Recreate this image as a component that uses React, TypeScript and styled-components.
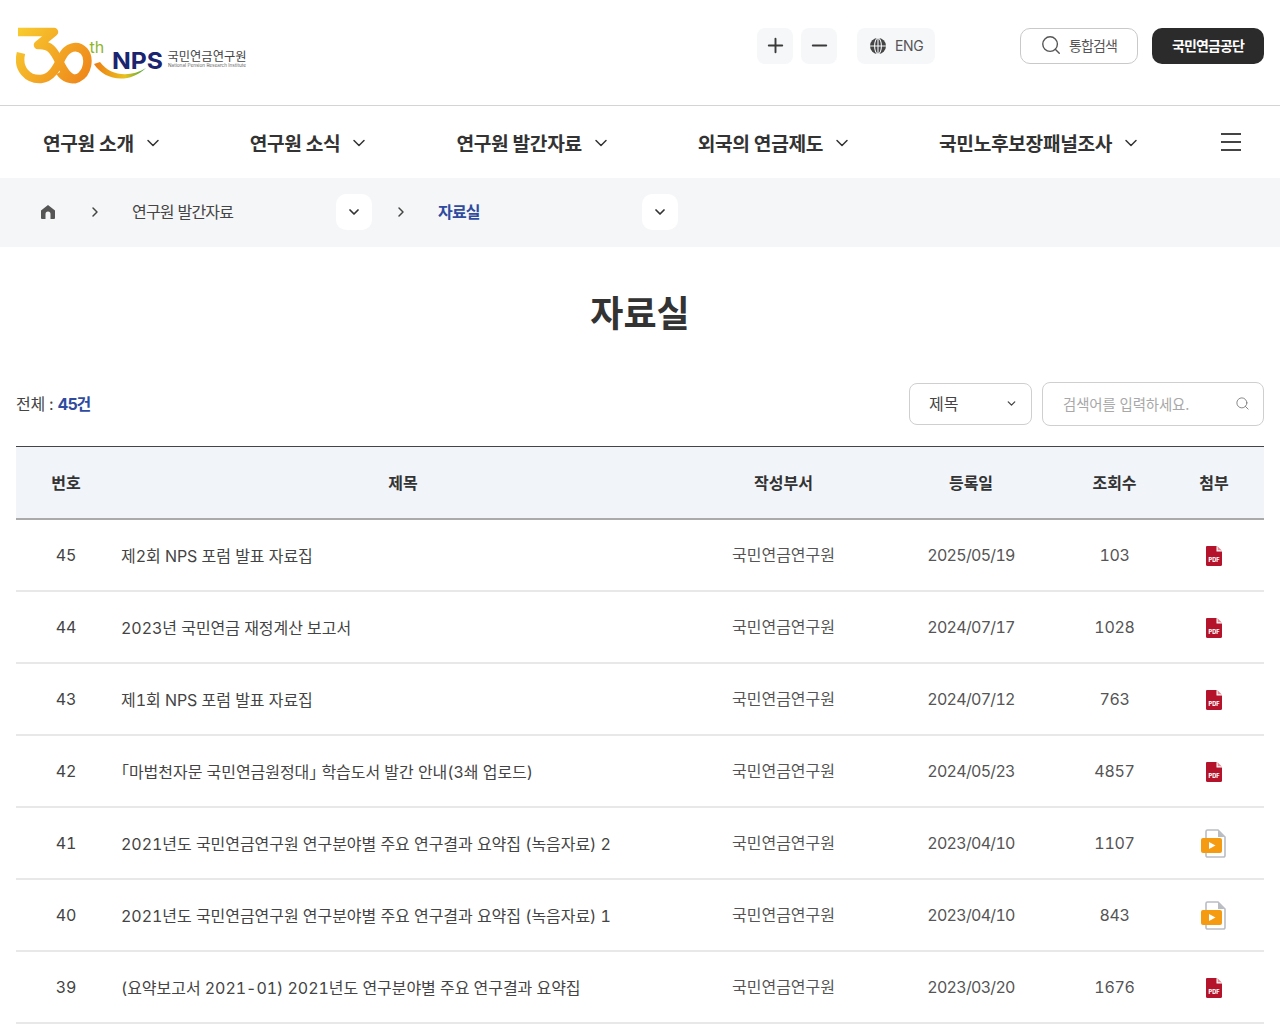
import React from 'react'
import styled, { createGlobalStyle } from 'styled-components'
import { ChevronDown, ChevronRight, Minus, Plus, Search } from 'lucide-react'

const GlobalStyle = createGlobalStyle`
  html, body {
    margin: 0;
    padding: 0;
    background: #fff;
    color: #333;
    font-family: Inter, "Noto Sans CJK KR", sans-serif;
    overflow: hidden;
  }
  * {
    box-sizing: border-box;
  }
`

const Header = styled.header`
  display: flex;
  align-items: center;
  height: 106px;
  padding: 0 16px 14px;
  border-bottom: 1px solid #d4d4d4;
`

const LogoLink = styled.a`
  display: block;
  width: 240px;
  height: 64px;
  margin-top: 20px;
  svg {
    display: block;
  }
`

const Tools = styled.div`
  display: flex;
  align-items: center;
  margin-left: auto;
`

const SizeButton = styled.button`
  display: flex;
  align-items: center;
  justify-content: center;
  width: 36px;
  height: 36px;
  margin-right: 8px;
  padding: 0;
  border: 0;
  border-radius: 8px;
  background: #f6f7f9;
  color: #3a3a3a;
`

const LangButton = styled.button`
  display: flex;
  align-items: center;
  gap: 8px;
  width: 78px;
  height: 36px;
  margin: 0 85px 0 12px;
  padding: 0 0 0 12px;
  border: 0;
  border-radius: 8px;
  background: #f6f7f9;
  color: #555;
  font: 400 14px Inter, "Noto Sans CJK KR", sans-serif;
  letter-spacing: -0.3px;
`

const SearchButton = styled.button`
  display: flex;
  align-items: center;
  gap: 7px;
  width: 118px;
  height: 36px;
  margin-right: 14px;
  padding: 0 0 2px 19px;
  border: 1px solid #c9c9c9;
  border-radius: 10px;
  background: #fff;
  color: #555;
  font: 400 14px Inter, "Noto Sans CJK KR", sans-serif;
  letter-spacing: -0.9px;
`

const AgencyButton = styled.button`
  width: 112px;
  height: 36px;
  padding: 0 0 2px;
  border: 0;
  border-radius: 10px;
  background: #2b2b2b;
  color: #fff;
  font: 700 14px Inter, "Noto Sans CJK KR", sans-serif;
  letter-spacing: -0.9px;
`

const Nav = styled.nav`
  display: flex;
  align-items: center;
  justify-content: space-between;
  height: 72px;
  padding: 0 39px 0 43px;
`

const NavList = styled.div`
  display: flex;
  align-items: center;
  gap: 87px;
  padding-top: 2px;
`

const NavItem = styled.a`
  display: flex;
  align-items: center;
  gap: 9px;
  color: #333;
  font-size: 19.2px;
  font-weight: 700;
  letter-spacing: -0.35px;
  white-space: nowrap;
`

const Burger = styled.button`
  display: flex;
  padding: 0;
  border: 0;
  background: none;
`

const Crumbs = styled.div`
  display: flex;
  align-items: center;
  height: 69px;
  padding: 0 0 1px 40px;
  background: #f5f6f7;
  font-size: 16px;
`

const HomeLink = styled.a`
  display: flex;
  width: 47px;
  color: #555;
`

const CrumbArrow = styled.span`
  display: flex;
  width: 45px;
  color: #444;
`

const CrumbSelect = styled.div<{ $current?: boolean }>`
  display: flex;
  align-items: center;
  justify-content: space-between;
  width: 240px;
  color: ${p => (p.$current ? '#2f4ba0' : '#444')};
  font-weight: ${p => (p.$current ? 700 : 400)};
  letter-spacing: -0.8px;
`

const CrumbLabel = styled.span`
  margin-bottom: 2px;
`

const CrumbToggle = styled.span`
  display: flex;
  align-items: center;
  justify-content: center;
  width: 36px;
  height: 36px;
  border-radius: 10px;
  background: #fff;
  color: #333;
`

const SecondArrow = styled(CrumbArrow)`
  margin-left: 21px;
`

const Main = styled.main`
  padding: 0 16px;
`

const Title = styled.h1`
  margin: 0;
  padding-top: 42px;
  height: 135px;
  color: #333;
  font-size: 36px;
  font-weight: 700;
  line-height: 50px;
  text-align: center;
`

const Toolbar = styled.div`
  display: flex;
  align-items: center;
  height: 44px;
  margin-bottom: 20px;
`

const Total = styled.p`
  margin: 0 auto 2px 0;
  color: #444;
  font-size: 16px;
  letter-spacing: -0.3px;
  strong {
    color: #2f4ba0;
    font-weight: 700;
    letter-spacing: -1px;
  }
`

const FieldSelect = styled.div`
  display: flex;
  align-items: center;
  justify-content: space-between;
  width: 123px;
  height: 42px;
  margin-right: 10px;
  padding: 0 13px 2px 19px;
  border: 1px solid #cfcfcf;
  border-radius: 8px;
  color: #444;
  font-size: 16px;
`

const SearchField = styled.div`
  display: flex;
  align-items: center;
  justify-content: space-between;
  width: 222px;
  height: 44px;
  padding: 0 13px 2px 20px;
  border: 1px solid #cfcfcf;
  border-radius: 8px;
  color: #a8a8a8;
  font-size: 14.4px;
  letter-spacing: -0.1px;
`

const Table = styled.table`
  width: 100%;
  border-collapse: collapse;
  border-top: 1px solid #444;
  table-layout: fixed;
  font-variant-numeric: tabular-nums;
`

const Th = styled.th`
  height: 72px;
  padding: 0;
  background: #f1f4f9;
  border-bottom: 2px solid #aaa;
  color: #333;
  font-size: 16px;
  font-weight: 700;
`

const Td = styled.td`
  height: 72px;
  padding: 0;
  border-bottom: 2px solid #e8e8e8;
  color: #555;
  font-size: 16px;
  text-align: center;
`

const NumCell = styled(Td)`
  color: #444;
`

const TitleCell = styled(Td)`
  padding-left: 5px;
  color: #444;
  letter-spacing: -0.05px;
  text-align: left;
  white-space: nowrap;
`

const DeptCell = styled(Td)`
  padding-bottom: 2px;
`

const DateCell = styled(Td)`
  letter-spacing: -0.7px;
`

const ViewsCell = styled(Td)`
  letter-spacing: -0.3px;
`

const FileIcon = styled.svg`
  display: block;
  margin: 2px auto 0;
`

const VideoFileIcon = styled(FileIcon)`
  position: relative;
  left: -1px;
`

const Logo = () => (
  <svg width="240" height="64" viewBox="16 24 240 64">
    <defs>
      <linearGradient id="logoOrange" gradientUnits="userSpaceOnUse" x1="18" y1="30" x2="88" y2="82">
        <stop offset="0" stopColor="#f8cb30" />
        <stop offset="1" stopColor="#ee8519" />
      </linearGradient>
      <linearGradient id="logoSwoosh" x1="0" y1="0" x2="1" y2="0">
        <stop offset="0" stopColor="#ee7d14" />
        <stop offset="0.6" stopColor="#e9c21f" />
        <stop offset="1" stopColor="#3fa63a" />
      </linearGradient>
    </defs>
    <path
      d="M18 32 H54 L38 45 C50 44 54 51 59 61 C64 72 70 79 76 79"
      fill="none"
      stroke="url(#logoOrange)"
      strokeWidth="8.5"
      strokeLinejoin="round"
    />
    <path
      d="M21 53 C17 69 28 80 41 79 C52 78 57 67 62 57 C67 47 77 44 84 51 C90 58 88 73 78 78 C71 81 64 78 60 72"
      fill="none"
      stroke="url(#logoOrange)"
      strokeWidth="8.5"
    />
    <path d="M94 64 C104 80 128 85 146 68 C130 78 110 76 100 62 Z" fill="url(#logoSwoosh)" />
    <text x="89.5" y="53" fontFamily="Inter, sans-serif" fontSize="16" fill="#8fb52a">th</text>
    <text x="112" y="68.5" fontFamily="Inter, sans-serif" fontSize="23" fontWeight="700" fill="#1a2470" textLength="51" lengthAdjust="spacingAndGlyphs">NPS</text>
    <text x="167.5" y="60.5" fontFamily="'Noto Sans CJK KR', sans-serif" fontSize="12.5" fill="#444" textLength="79" lengthAdjust="spacingAndGlyphs">국민연금연구원</text>
    <text x="168" y="67" fontFamily="Inter, sans-serif" fontSize="4.4" fill="#666" textLength="78" lengthAdjust="spacingAndGlyphs">National Pension Research Institute</text>
  </svg>
)

const GlobeIcon = () => (
  <svg width="18" height="18" viewBox="0 0 18 18">
    <circle cx="9" cy="9" r="8" fill="#444" />
    <ellipse cx="9" cy="9" rx="3.4" ry="8" fill="none" stroke="#f6f7f9" strokeWidth="1.1" />
    <path d="M1 9 H17 M9 1 V17" stroke="#f6f7f9" strokeWidth="1.1" />
  </svg>
)

const HomeIcon = () => (
  <svg width="16" height="16" viewBox="0 0 16 16">
    <path
      d="M8 1 L15 6.5 V14 a1 1 0 0 1 -1 1 H10.5 V10 a2.5 2.5 0 0 0 -5 0 V15 H2 a1 1 0 0 1 -1 -1 V6.5 Z"
      fill="#555"
    />
  </svg>
)

const BurgerIcon = () => (
  <svg width="20" height="18" viewBox="0 0 20 18">
    <path d="M0 1 H20 M0 9 H20 M0 17 H20" stroke="#444" strokeWidth="2" />
  </svg>
)

const PdfIcon = () => (
  <FileIcon width="18" height="22" viewBox="0 0 18 22">
    <path
      d="M2 1 H11.5 L17 6.5 V19.5 a1.5 1.5 0 0 1 -1.5 1.5 H2.5 A1.5 1.5 0 0 1 1 19.5 V2 a1 1 0 0 1 1 -1 Z"
      fill="#b5132b"
    />
    <path d="M11.5 1 V6.5 H17 Z" fill="#fff" />
    <path d="M12.7 1.5 L16.5 5.3 H12.7 Z" fill="#e58a95" />
    <text x="9" y="16.5" fontFamily="Inter, sans-serif" fontSize="5.6" fontWeight="800" fill="#fff" textAnchor="middle">PDF</text>
  </FileIcon>
)

const VideoIcon = () => (
  <VideoFileIcon width="26" height="30" viewBox="0 0 26 30">
    <path
      d="M6 9 V2.5 a1.5 1.5 0 0 1 1.5 -1.5 H18 L25 8 V26.5 a1.5 1.5 0 0 1 -1.5 1.5 H7.5 A1.5 1.5 0 0 1 6 26.5 V24"
      fill="#fff"
      stroke="#b9bdc2"
      strokeWidth="1.6"
    />
    <path d="M18 1.5 V8 H24.5 Z" fill="#b9bdc2" />
    <rect x="1" y="9" width="21" height="15" rx="2" fill="#f59b12" />
    <path d="M9 13 L15.5 16.5 L9 20 Z" fill="#fff" />
  </VideoFileIcon>
)

const rows = [
  { no: 45, title: '제2회 NPS 포럼 발표 자료집', date: '2025/05/19', views: 103, file: 'pdf' },
  { no: 44, title: '2023년 국민연금 재정계산 보고서', date: '2024/07/17', views: 1028, file: 'pdf' },
  { no: 43, title: '제1회 NPS 포럼 발표 자료집', date: '2024/07/12', views: 763, file: 'pdf' },
  { no: 42, title: '｢마법천자문 국민연금원정대｣ 학습도서 발간 안내(3쇄 업로드)', date: '2024/05/23', views: 4857, file: 'pdf' },
  { no: 41, title: '2021년도 국민연금연구원 연구분야별 주요 연구결과 요약집 (녹음자료) 2', date: '2023/04/10', views: 1107, file: 'video' },
  { no: 40, title: '2021년도 국민연금연구원 연구분야별 주요 연구결과 요약집 (녹음자료) 1', date: '2023/04/10', views: 843, file: 'video' },
  { no: 39, title: '(요약보고서 2021-01) 2021년도 연구분야별 주요 연구결과 요약집', date: '2023/03/20', views: 1676, file: 'pdf' },
]

const menu = ['연구원 소개', '연구원 소식', '연구원 발간자료', '외국의 연금제도', '국민노후보장패널조사']

const App = () => {
  return (
    <>
      <GlobalStyle />
      <Header>
        <LogoLink>
          <Logo />
        </LogoLink>
        <Tools>
          <SizeButton>
            <Plus size={23} strokeWidth={2} />
          </SizeButton>
          <SizeButton>
            <Minus size={23} strokeWidth={2} />
          </SizeButton>
          <LangButton>
            <GlobeIcon />
            ENG
          </LangButton>
          <SearchButton>
            <Search size={22} strokeWidth={1.5} />
            통합검색
          </SearchButton>
          <AgencyButton>국민연금공단</AgencyButton>
        </Tools>
      </Header>
      <Nav>
        <NavList>
          {menu.map(item => (
            <NavItem key={item}>
              {item}
              <ChevronDown size={20} strokeWidth={1.8} />
            </NavItem>
          ))}
        </NavList>
        <Burger>
          <BurgerIcon />
        </Burger>
      </Nav>
      <Crumbs>
        <HomeLink>
          <HomeIcon />
        </HomeLink>
        <CrumbArrow>
          <ChevronRight size={16} strokeWidth={2.2} />
        </CrumbArrow>
        <CrumbSelect>
          <CrumbLabel>연구원 발간자료</CrumbLabel>
          <CrumbToggle>
            <ChevronDown size={16} strokeWidth={2.6} />
          </CrumbToggle>
        </CrumbSelect>
        <SecondArrow>
          <ChevronRight size={16} strokeWidth={2.2} />
        </SecondArrow>
        <CrumbSelect $current>
          <CrumbLabel>자료실</CrumbLabel>
          <CrumbToggle>
            <ChevronDown size={16} strokeWidth={2.6} />
          </CrumbToggle>
        </CrumbSelect>
      </Crumbs>
      <Main>
        <Title>자료실</Title>
        <Toolbar>
          <Total>
            전체 : <strong>45건</strong>
          </Total>
          <FieldSelect>
            제목
            <ChevronDown size={13} strokeWidth={2.4} color="#444" />
          </FieldSelect>
          <SearchField>
            검색어를 입력하세요.
            <Search size={15} strokeWidth={1.4} color="#777" />
          </SearchField>
        </Toolbar>
        <Table>
          <colgroup>
            <col width="100" />
            <col width="574" />
            <col width="187" />
            <col width="188" />
            <col width="99" />
            <col width="100" />
          </colgroup>
          <thead>
            <tr>
              <Th>번호</Th>
              <Th>제목</Th>
              <Th>작성부서</Th>
              <Th>등록일</Th>
              <Th>조회수</Th>
              <Th>첨부</Th>
            </tr>
          </thead>
          <tbody>
            {rows.map(row => (
              <tr key={row.no}>
                <NumCell>{row.no}</NumCell>
                <TitleCell>{row.title}</TitleCell>
                <DeptCell>국민연금연구원</DeptCell>
                <DateCell>{row.date}</DateCell>
                <ViewsCell>{row.views}</ViewsCell>
                <Td>{row.file === 'pdf' ? <PdfIcon /> : <VideoIcon />}</Td>
              </tr>
            ))}
          </tbody>
        </Table>
      </Main>
    </>
  )
}

export default App
